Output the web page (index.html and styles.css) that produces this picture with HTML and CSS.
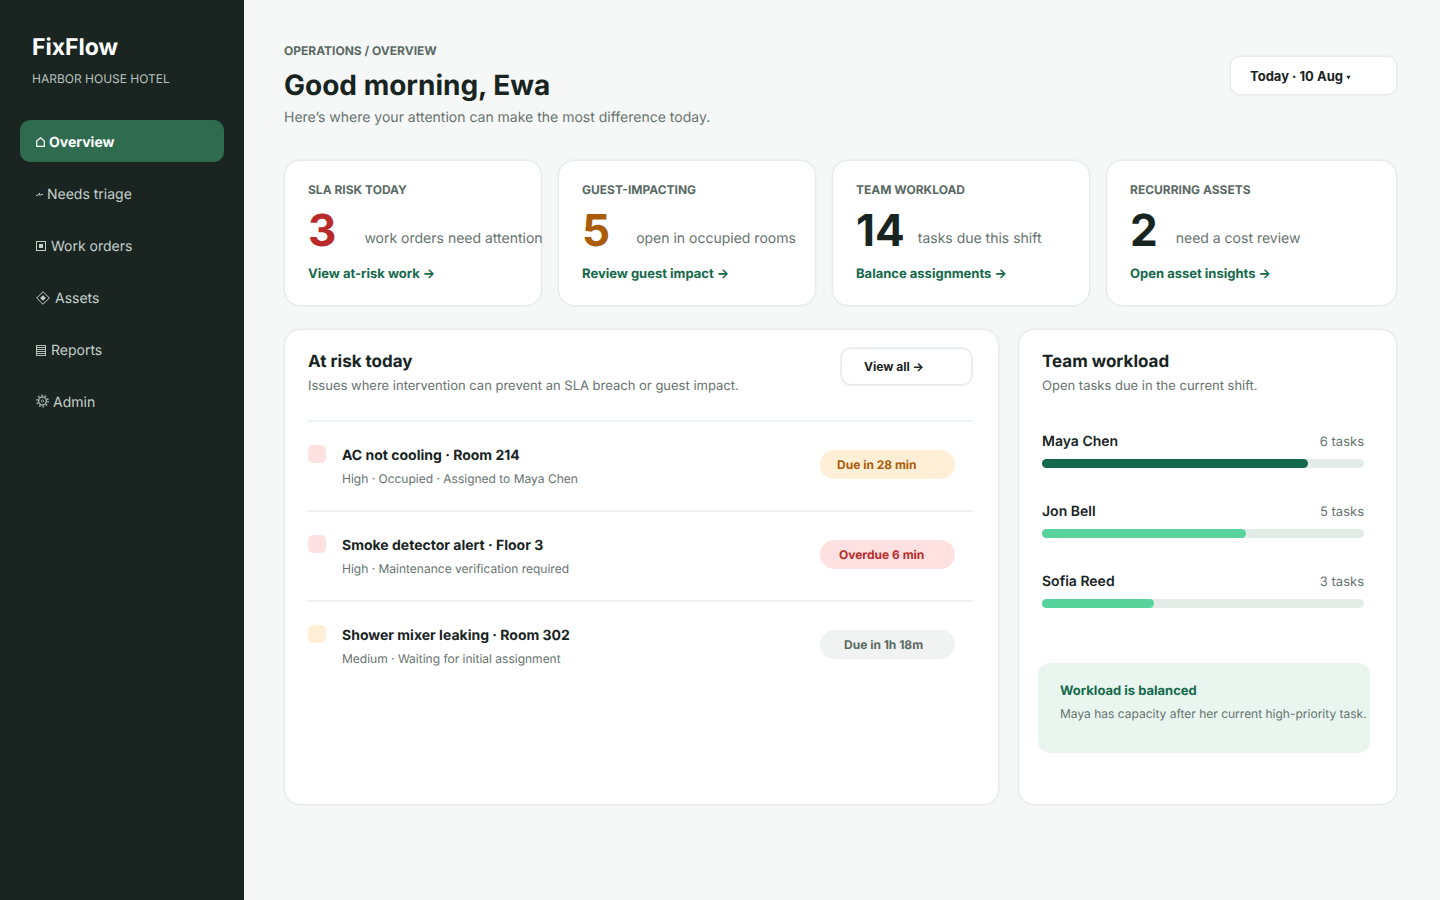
FILE: index.html
```html
<!DOCTYPE html>
<html lang="en">
<head>
    <meta charset="UTF-8">
    <title>FixFlow - Overview</title>
    <link rel="stylesheet" href="styles.css">
</head>
<body>
    <aside class="sidebar">
        <div class="brand">FixFlow</div>
        <div class="property">HARBOR HOUSE HOTEL</div>
        <nav class="nav">
            <a class="nav-item active" href="#">
                <svg width="9" height="10" viewBox="0 0 9 10" fill="none" stroke="currentColor" stroke-width="1.2"><path d="M.7 9.4V4.1L4.5.8l3.8 3.3v5.3z"/></svg>
                Overview
            </a>
            <a class="nav-item" href="#">
                <svg width="7" height="5" viewBox="0 0 7 5" fill="none" stroke="currentColor" stroke-width=".9"><path d="M0 3.3h2L3.5 1l.5 2.6 1-1.1h2"/></svg>
                Needs triage
            </a>
            <a class="nav-item" href="#">
                <svg width="11" height="10" viewBox="0 0 11 10" fill="none" stroke="currentColor"><rect x=".5" y=".5" width="9" height="9"/><rect x="3" y="3" width="4" height="4" fill="currentColor" stroke="none"/></svg>
                Work orders
            </a>
            <a class="nav-item" href="#">
                <svg width="15" height="14" viewBox="0 0 15 14" fill="none" stroke="currentColor"><path d="M7 .7 13.3 7 7 13.3.7 7z"/><path d="M7 4.2 9.8 7 7 9.8 4.2 7z" fill="currentColor" stroke="none"/></svg>
                Assets
            </a>
            <a class="nav-item" href="#">
                <svg width="11" height="11" viewBox="0 0 11 11" fill="none" stroke="currentColor" stroke-width=".9"><rect x=".5" y=".5" width="9" height="10"/><path d="M.5 2.5h9M.5 4.5h9M.5 6.5h9M.5 8.5h9"/></svg>
                Reports
            </a>
            <a class="nav-item" href="#">
                <svg class="gear" width="13" height="14" viewBox="0 0 13 14" fill="none" stroke="currentColor"><circle cx="6.5" cy="7" r="5.6" stroke-width="1.6" stroke-dasharray="1.6 1.9"/><circle cx="6.5" cy="7" r="3.9" stroke-width="1.5"/><circle cx="6.5" cy="7" r="1.2" stroke-width=".8"/></svg>
                Admin
            </a>
        </nav>
    </aside>

    <main class="main">
        <header class="page-head">
            <div>
                <div class="eyebrow">OPERATIONS / OVERVIEW</div>
                <h1>Good morning, Ewa</h1>
                <p class="lead">Here’s where your attention can make the most difference today.</p>
            </div>
            <button class="date-btn">Today · 10 Aug <svg class="caret" width="5" height="5" viewBox="0 0 5 5"><path d="M.4.8h4.2L2.5 4.4z" fill="currentColor"/></svg></button>
        </header>

        <section class="stats">
            <div class="stat">
                <div class="stat-label">SLA RISK TODAY</div>
                <div class="stat-row gap-risk">
                    <span class="stat-num red">3</span>
                    <span class="stat-text">work orders need attention</span>
                </div>
                <a class="stat-link" href="#">View at-risk work →</a>
            </div>
            <div class="stat">
                <div class="stat-label">GUEST-IMPACTING</div>
                <div class="stat-row gap-guest">
                    <span class="stat-num amber">5</span>
                    <span class="stat-text">open in occupied rooms</span>
                </div>
                <a class="stat-link" href="#">Review guest impact →</a>
            </div>
            <div class="stat">
                <div class="stat-label">TEAM WORKLOAD</div>
                <div class="stat-row gap-team">
                    <span class="stat-num">14</span>
                    <span class="stat-text">tasks due this shift</span>
                </div>
                <a class="stat-link" href="#">Balance assignments →</a>
            </div>
            <div class="stat">
                <div class="stat-label">RECURRING ASSETS</div>
                <div class="stat-row gap-assets">
                    <span class="stat-num">2</span>
                    <span class="stat-text">need a cost review</span>
                </div>
                <a class="stat-link" href="#">Open asset insights →</a>
            </div>
        </section>

        <section class="panels">
            <div class="panel risk-panel">
                <div class="panel-head">
                    <div>
                        <h2>At risk today</h2>
                        <p class="panel-sub">Issues where intervention can prevent an SLA breach or guest impact.</p>
                    </div>
                    <button class="view-all">View all →</button>
                </div>
                <div class="risk-row">
                    <span class="swatch swatch-red"></span>
                    <div class="risk-body">
                        <div class="risk-title">AC not cooling · Room 214</div>
                        <div class="risk-meta">High · Occupied · Assigned to Maya Chen</div>
                    </div>
                    <span class="pill pill-warn">Due in 28 min</span>
                </div>
                <div class="risk-row">
                    <span class="swatch swatch-red"></span>
                    <div class="risk-body">
                        <div class="risk-title">Smoke detector alert · Floor 3</div>
                        <div class="risk-meta">High · Maintenance verification required</div>
                    </div>
                    <span class="pill pill-danger">Overdue 6 min</span>
                </div>
                <div class="risk-row">
                    <span class="swatch swatch-amber"></span>
                    <div class="risk-body">
                        <div class="risk-title">Shower mixer leaking · Room 302</div>
                        <div class="risk-meta">Medium · Waiting for initial assignment</div>
                    </div>
                    <span class="pill pill-muted">Due in 1h 18m</span>
                </div>
            </div>

            <div class="panel team-panel">
                <h2>Team workload</h2>
                <p class="panel-sub">Open tasks due in the current shift.</p>
                <div class="people">
                    <div class="person">
                        <div class="person-row"><strong>Maya Chen</strong><span>6 tasks</span></div>
                        <div class="track"><div class="fill fill-dark" style="width: 266px"></div></div>
                    </div>
                    <div class="person">
                        <div class="person-row"><strong>Jon Bell</strong><span>5 tasks</span></div>
                        <div class="track"><div class="fill" style="width: 204px"></div></div>
                    </div>
                    <div class="person">
                        <div class="person-row"><strong>Sofia Reed</strong><span>3 tasks</span></div>
                        <div class="track"><div class="fill" style="width: 112px"></div></div>
                    </div>
                </div>
                <div class="callout">
                    <div class="callout-title">Workload is balanced</div>
                    <div class="callout-text">Maya has capacity after her current high-priority task.</div>
                </div>
            </div>
        </section>
    </main>
</body>
</html>
```

FILE: styles.css
```css
* {
    margin: 0;
    padding: 0;
    box-sizing: border-box;
}

body {
    display: flex;
    height: 900px;
    overflow: hidden;
    background: #f6f8f7;
    color: #18241f;
    font-family: Inter, sans-serif;
    text-rendering: geometricPrecision;
}

.sidebar {
    width: 244px;
    flex-shrink: 0;
    padding: 32px 20px;
    background: #1a2522;
}

.brand {
    padding-left: 12px;
    font-size: 23px;
    line-height: 30px;
    font-weight: 700;
    color: #fff;
}

.property {
    margin-top: 9px;
    padding-left: 12px;
    font-size: 12px;
    line-height: 16px;
    color: #b6c2bd;
}

.nav {
    display: flex;
    flex-direction: column;
    gap: 10px;
    margin-top: 33px;
}

.nav-item {
    display: flex;
    align-items: center;
    gap: 4px;
    height: 42px;
    padding: 2px 0 0 16px;
    border-radius: 10px;
    font-size: 14px;
    color: #c5d0cb;
    text-decoration: none;
}

.nav-item.active {
    background: #2e6b4f;
    color: #fff;
    font-weight: 700;
}

.gear {
    margin-bottom: 2px;
    color: #a3aeaa;
}

.main {
    flex: 1;
    padding: 41px 43px 0 40px;
}

.page-head {
    display: flex;
    justify-content: space-between;
    align-items: flex-start;
}

.eyebrow {
    font-size: 12px;
    line-height: 20px;
    font-weight: 700;
    color: #5a6a63;
}

h1 {
    margin-top: 6px;
    font-size: 28px;
    line-height: 36px;
    font-weight: 700;
}

.lead {
    margin-top: 4px;
    font-size: 14px;
    line-height: 22px;
    color: #66736e;
}

.date-btn {
    width: 167px;
    height: 39px;
    margin-top: 15px;
    padding-left: 19px;
    background: #fff;
    border: 1px solid #e6ebe9;
    box-shadow: 0 0 0 1px #eff2f1;
    border-radius: 10px;
    font: 700 13px Inter, sans-serif;
    color: #18241f;
    text-align: left;
}

.caret {
    vertical-align: 1px;
}

.stats {
    display: grid;
    grid-template-columns: 258px 258px 258px 291px;
    gap: 16px;
    margin-top: 31px;
}

.stat {
    height: 146px;
    padding: 21px 23px;
    background: #fff;
    border: 1px solid #e6ebe9;
    box-shadow: 0 0 0 1px #eff2f1;
    border-radius: 16px;
}

.stat-label {
    font-size: 12px;
    line-height: 16px;
    font-weight: 700;
    color: #5a6a63;
}

.stat-row {
    display: flex;
    align-items: flex-end;
    margin-top: 7px;
    white-space: nowrap;
}

.gap-risk { gap: 28px; }
.gap-guest { gap: 26px; }
.gap-team { gap: 13px; }
.gap-assets { gap: 18px; }

.stat-num {
    font-size: 44px;
    line-height: 50px;
    font-weight: 700;
}

.red { color: #b92b2b; }
.amber { color: #ab5c08; }

.stat-text {
    padding-bottom: 7px;
    font-size: 14px;
    line-height: 18px;
    color: #66736e;
}

.stat-link {
    display: block;
    margin-top: 10px;
    font-size: 13px;
    line-height: 18px;
    font-weight: 700;
    color: #14694a;
    text-decoration: none;
}

.panels {
    display: grid;
    grid-template-columns: 715px 379px;
    gap: 19px;
    margin-top: 23px;
}

.panel {
    height: 476px;
    background: #fff;
    border: 1px solid #e6ebe9;
    box-shadow: 0 0 0 1px #eff2f1;
    border-radius: 16px;
}

.risk-panel {
    padding: 17px 25px 0 23px;
}

.panel-head {
    display: flex;
    justify-content: space-between;
    align-items: flex-start;
    height: 75px;
    border-bottom: 2px solid #eef2f0;
}

h2 {
    margin-top: 4px;
    font-size: 17px;
    line-height: 22px;
    font-weight: 700;
}

.panel-sub {
    margin-top: 4px;
    font-size: 13px;
    line-height: 18px;
    color: #66736e;
}

.view-all {
    width: 131px;
    height: 37px;
    margin-top: 1px;
    margin-right: 1px;
    padding-left: 22px;
    background: #fff;
    border: 1px solid #e6ebe9;
    box-shadow: 0 0 0 1px #eff2f1;
    border-radius: 10px;
    font: 700 12px Inter, sans-serif;
    color: #18241f;
    text-align: left;
}

.risk-row {
    display: flex;
    align-items: flex-start;
    height: 90px;
    padding-top: 23px;
    border-bottom: 2px solid #eef2f0;
}

.risk-row:last-child {
    border-bottom: 0;
}

.swatch {
    width: 18px;
    height: 18px;
    border-radius: 5px;
}

.swatch-red { background: #ffe1e1; }
.swatch-amber { background: #ffefd6; }

.risk-body {
    flex: 1;
    margin-left: 16px;
}

.risk-title {
    font-size: 14px;
    line-height: 21px;
    font-weight: 700;
}

.risk-meta {
    margin-top: 5px;
    font-size: 12px;
    line-height: 16px;
    color: #66736e;
}

.pill {
    width: 135px;
    height: 29px;
    margin-top: 5px;
    margin-right: 18px;
    border-radius: 15px;
    font-size: 12px;
    line-height: 29px;
    font-weight: 700;
}

.pill-warn {
    padding-left: 17px;
    background: #ffefd6;
    color: #ab5c08;
}

.pill-danger {
    padding-left: 19px;
    background: #ffe1e1;
    color: #b92b2b;
}

.pill-muted {
    padding-left: 24px;
    background: #f0f3f2;
    color: #5a6a63;
}

.team-panel {
    padding: 17px 0 0 19px;
}

.team-panel h2,
.team-panel .panel-sub {
    margin-left: 4px;
}

.people {
    width: 322px;
    margin: 37px 0 0 4px;
}

.person {
    margin-bottom: 34px;
}

.person-row {
    display: flex;
    justify-content: space-between;
    font-size: 13px;
    line-height: 20px;
    color: #66736e;
}

.person-row strong {
    font-size: 14px;
    font-weight: 600;
    color: #18241f;
}

.track {
    height: 9px;
    margin-top: 7px;
    background: #e4ece8;
    border-radius: 5px;
}

.fill {
    height: 9px;
    background: #57d39b;
    border-radius: 5px;
}

.fill-dark {
    background: #14694a;
}

.callout {
    width: 332px;
    height: 90px;
    margin-top: 55px;
    padding: 19px 0 0 22px;
    background: #e8f6ef;
    border-radius: 12px;
    white-space: nowrap;
}

.callout-title {
    font-size: 13px;
    line-height: 18px;
    font-weight: 700;
    color: #14694a;
}

.callout-text {
    margin-top: 6px;
    font-size: 12px;
    line-height: 16px;
    color: #66736e;
}
```
